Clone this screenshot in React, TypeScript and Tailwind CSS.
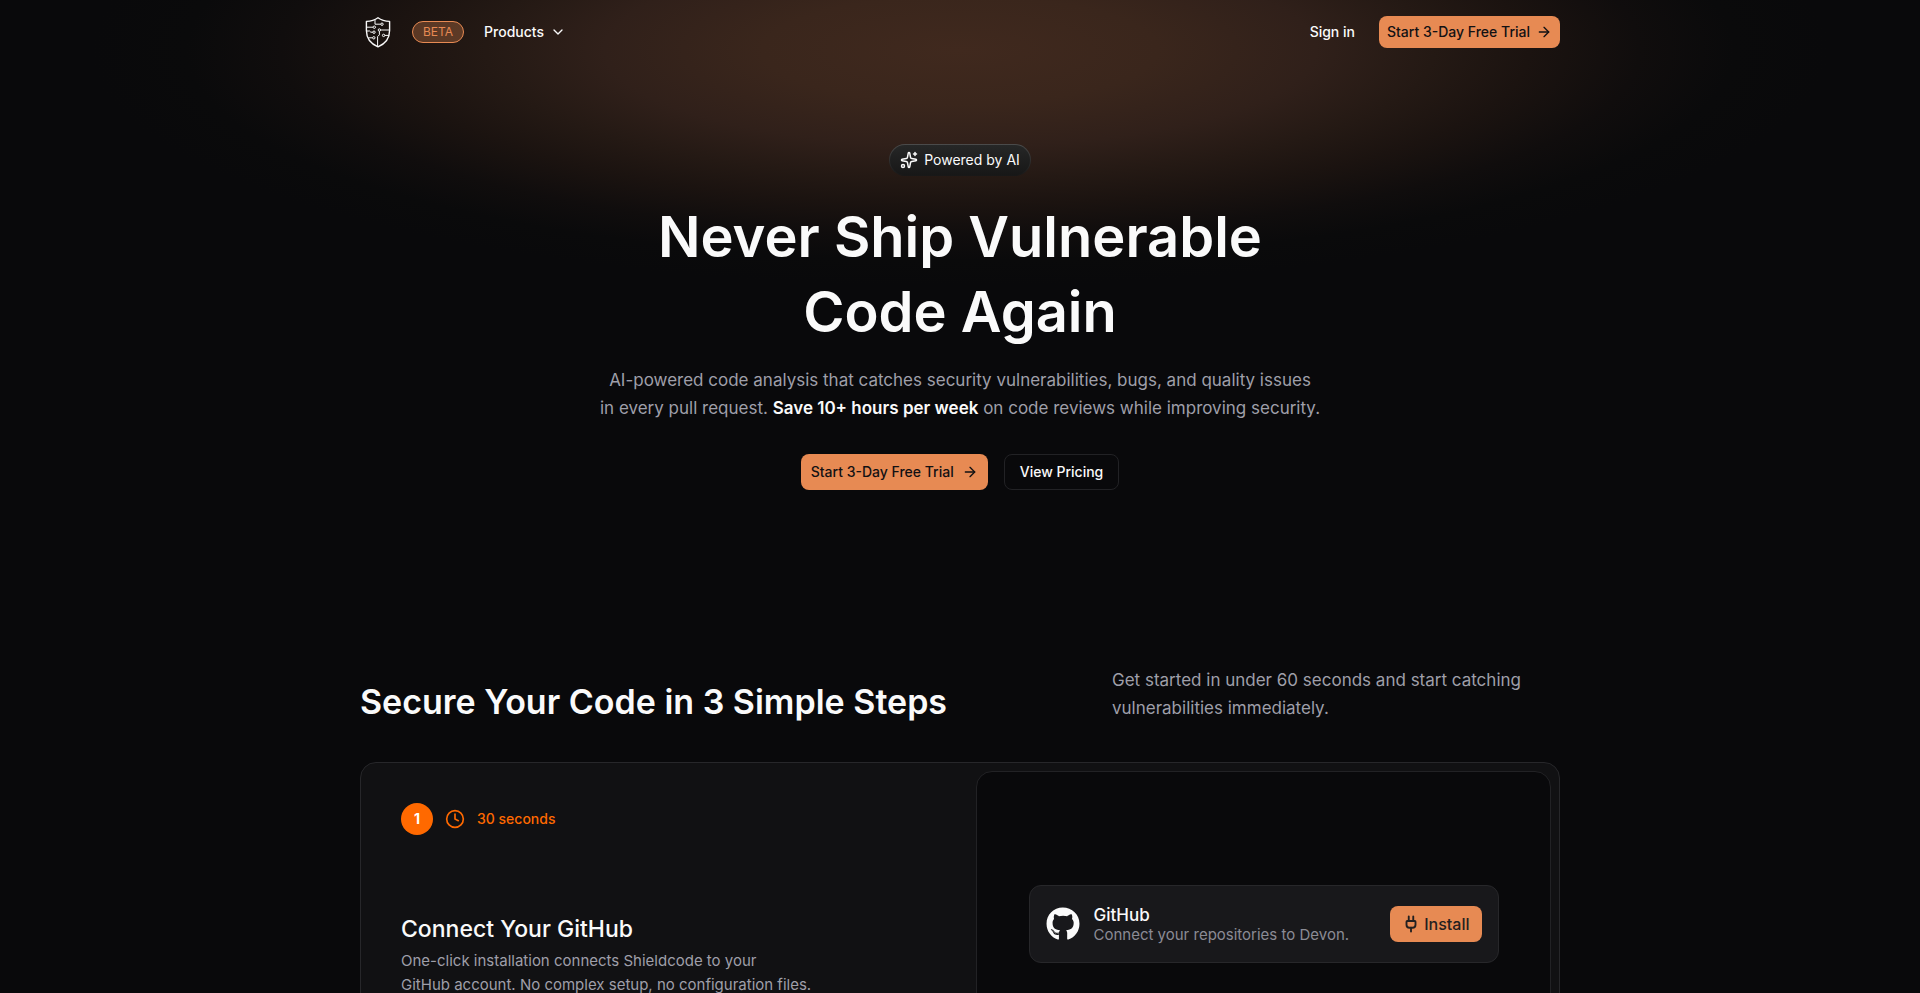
import { ArrowRight, ChevronDown, Clock, Plug, Sparkles } from "lucide-react";
import { FaGithub } from "react-icons/fa";

function ShieldLogo() {
  return (
    <svg viewBox="0 0 36 36" className="size-9" fill="none" stroke="currentColor" aria-hidden="true">
      <path
        d="M18 3.8 C21.5 6.4 25.5 7.3 29.6 7.4 V16.5 C29.6 24.5 25.2 29.8 18 32.8 C10.8 29.8 6.4 24.5 6.4 16.5 V7.4 C10.5 7.3 14.5 6.4 18 3.8 Z"
        strokeWidth="1.4"
        strokeLinejoin="round"
      />
      <g strokeWidth="1">
        <path d="M15 6 V10.2 H20.8" />
        <path d="M6.5 13.2 H13" />
        <path d="M6.5 17 H9.6 L10.8 18.2 H12.8" />
        <path d="M8.4 23.8 H12.6" />
        <path d="M29.4 16 H20.6" />
        <path d="M29 21.4 H24.8" />
        <path d="M19.4 17.2 V20.8 L17.6 22.6 V32" />
        <circle cx="22" cy="10.2" r="1.2" />
        <circle cx="14.3" cy="13.2" r="1.2" />
        <circle cx="14" cy="18.2" r="1.2" />
        <circle cx="13.8" cy="23.8" r="1.2" />
        <circle cx="19.4" cy="16" r="1.2" />
        <circle cx="23.6" cy="21.4" r="1.2" />
      </g>
    </svg>
  );
}

function Header() {
  return (
    <header className="mx-auto flex h-16 w-full max-w-[1200px] items-center justify-between">
      <div className="flex items-center">
        <a href="#home" aria-label="Shieldcode home" className="mr-4">
          <ShieldLogo />
        </a>
        <span className="flex h-[22px] items-center rounded-full border border-[#e78a53] bg-[#e78a53]/30 px-2.5 text-xs text-[#e78a53]">
          BETA
        </span>
        <button type="button" className="ml-5 flex items-center gap-1.5 text-sm font-medium">
          Products
          <ChevronDown className="size-4" />
        </button>
      </div>
      <nav className="flex items-center gap-6">
        <a href="#signin" className="text-sm font-medium">
          Sign in
        </a>
        <a
          href="#trial"
          className="flex h-8 items-center gap-1.5 rounded-lg bg-[#e78a53] px-2 text-sm font-medium text-[#121113]"
        >
          Start 3-Day Free Trial
          <ArrowRight className="size-4" />
        </a>
      </nav>
    </header>
  );
}

function Hero() {
  return (
    <section className="flex flex-col items-center pt-20 text-center">
      <div className="rounded-full bg-linear-to-b from-[#4b4b4b] to-[#171717] p-px">
        <div className="flex h-[30px] items-center gap-1.5 rounded-full bg-linear-to-b from-[#262727] to-[#171717] px-2.5 text-sm">
          <Sparkles className="size-[18px]" />
          Powered by AI
        </div>
      </div>
      <h1 className="mt-6 max-w-[720px] text-[56px] leading-[75px] font-semibold">
        Never Ship Vulnerable Code Again
      </h1>
      <p className="mt-4 text-[17px] leading-7 text-[#9f9fa9]">
        AI-powered code analysis that catches security vulnerabilities, bugs, and quality issues
        <br />
        in every pull request.{" "}
        <strong className="font-semibold text-[#fafafa]">Save 10+ hours per week</strong> on code
        reviews while improving security.
      </p>
      <div className="mt-8 flex gap-4">
        <a
          href="#trial"
          className="flex h-9 items-center gap-2 rounded-lg bg-[#e78a53] px-2.5 text-sm font-medium text-[#121113]"
        >
          Start 3-Day Free Trial
          <ArrowRight className="size-4" />
        </a>
        <a
          href="#pricing"
          className="flex h-9 items-center rounded-lg border border-[#222225] px-[15px] text-sm font-medium"
        >
          View Pricing
        </a>
      </div>
    </section>
  );
}

function InstallPreview() {
  return (
    <div className="flex h-[78px] w-full max-w-[470px] items-center rounded-xl border border-[#27272a] bg-[#18181b] px-4">
      <FaGithub className="size-[34px] shrink-0" />
      <div className="ml-3.5 flex-1 pt-0.5">
        <p className="text-[17px] leading-5 font-medium">GitHub</p>
        <p className="text-[15px] leading-5 text-[#8b8b95]">Connect your repositories to Devon.</p>
      </div>
      <button
        type="button"
        className="flex h-9 items-center gap-1 rounded-lg bg-[#e78a53] px-3 text-base font-medium text-[#232020]"
      >
        <Plug className="size-[18px]" strokeWidth={2.5} />
        Install
      </button>
    </div>
  );
}

function Steps() {
  return (
    <section className="mx-auto w-full max-w-[1200px] pt-[176px] pb-20">
      <div className="flex items-end justify-between">
        <h2 className="text-[34px] leading-10 font-semibold">Secure Your Code in 3 Simple Steps</h2>
        <p className="w-[448px] text-[17px] leading-7 text-[#9f9fa9]">
          Get started in under 60 seconds and start catching
          <br />
          vulnerabilities immediately.
        </p>
      </div>
      <article className="mt-10 grid min-h-[420px] grid-cols-[615fr_583fr] rounded-2xl border border-[#27272a] bg-[#111113]">
        <div className="p-10">
          <div className="flex items-center gap-3 text-[#ff6900]">
            <span className="flex size-8 items-center justify-center rounded-full bg-[#ff6900] text-sm font-bold text-white">
              1
            </span>
            <Clock className="size-5" />
            <span className="text-sm font-medium">30 seconds</span>
          </div>
          <h3 className="mt-[78px] text-[23px] leading-8 font-medium">Connect Your GitHub</h3>
          <p className="mt-1 text-[15px] leading-6 text-[#9f9fa9]">
            One-click installation connects Shieldcode to your
            <br />
            GitHub account. No complex setup, no configuration files.
          </p>
        </div>
        <div className="m-2 ml-0 flex justify-center rounded-2xl border border-[#222225] bg-[#09090b] px-8 pt-[113px]">
          <InstallPreview />
        </div>
      </article>
    </section>
  );
}

export default function App() {
  return (
    <div className="h-screen overflow-y-auto bg-[#09090b] bg-[radial-gradient(ellipse_790px_215px_at_50%_50px,#40291e_0%,#3a261c_25%,#30201a_45%,#241914_60%,#1b1310_72%,#100d0d_86%,#0a0a0b_98%,#09090b_110%)] font-['Inter',sans-serif] text-[#fafafa] antialiased [scrollbar-width:none]">
      <Header />
      <main>
        <Hero />
        <Steps />
      </main>
    </div>
  );
}
